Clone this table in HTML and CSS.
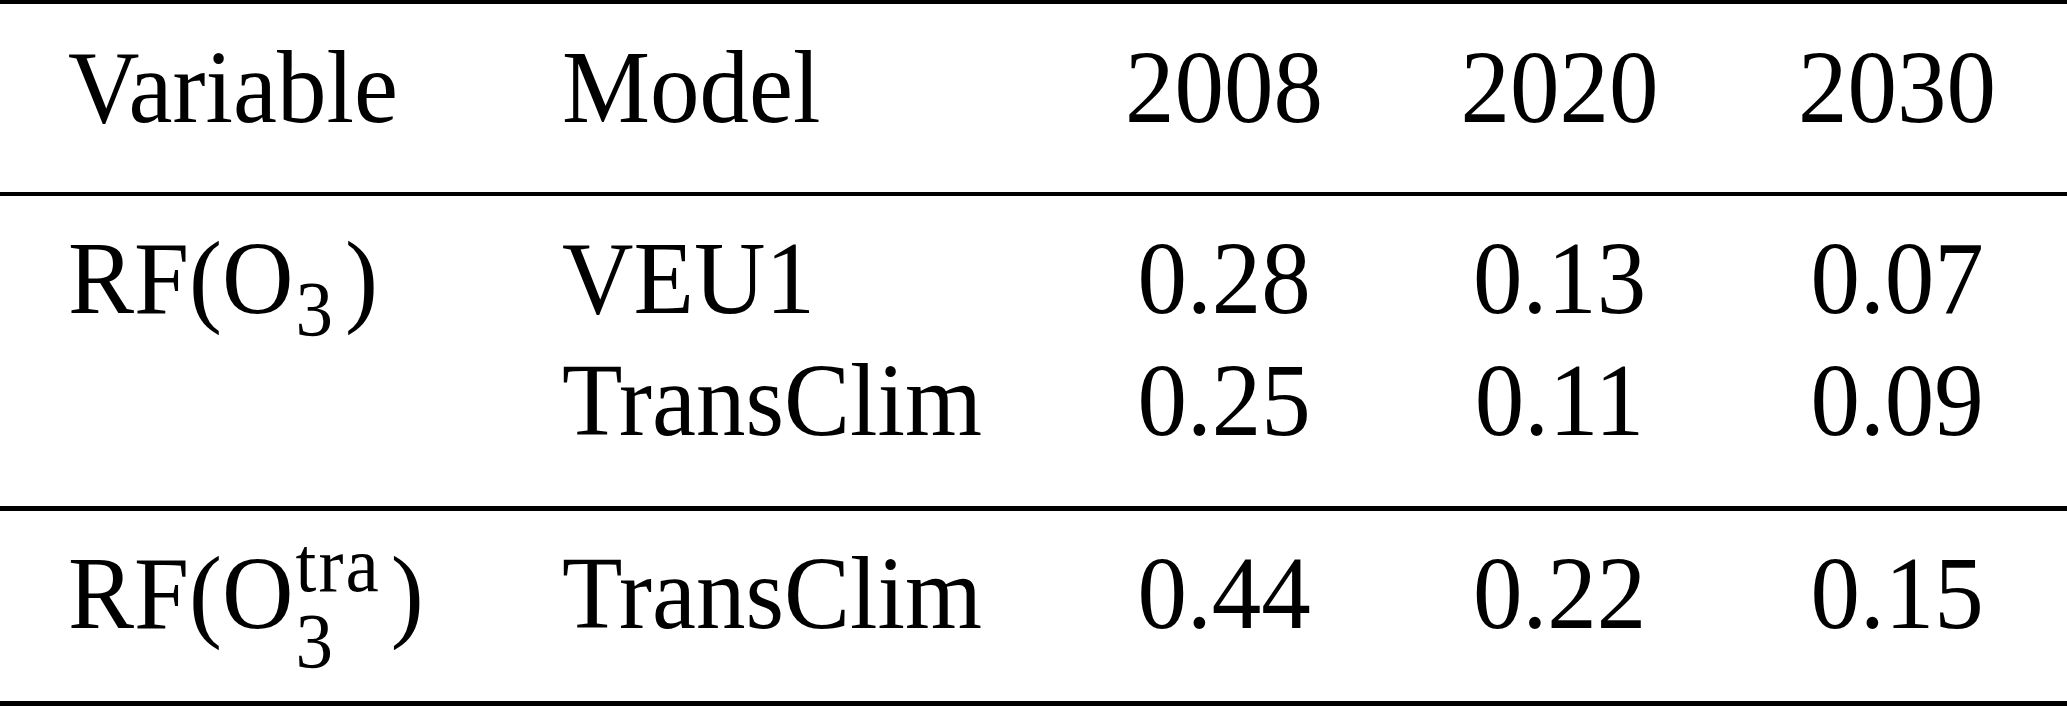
FILE: index.html
```html
<!DOCTYPE html>
<html>
<head>
<meta charset="utf-8">
<link rel="stylesheet" href="styles.css">
</head>
<body>
<table class="tbl">
  <colgroup>
    <col class="c1"><col class="c2"><col class="c3"><col class="c4"><col class="c5">
  </colgroup>
  <thead>
    <tr>
      <th><span class="tx">Variable</span></th>
      <th><span class="tx">Model</span></th>
      <th class="num"><span class="tx">2008</span></th>
      <th class="num"><span class="tx">2020</span></th>
      <th class="num"><span class="tx">2030</span></th>
    </tr>
  </thead>
  <tbody class="grp">
    <tr class="first">
      <td><span class="tx">RF(O<span class="sub sub-a">3</span>)</span></td>
      <td><span class="tx">VEU1</span></td>
      <td class="num"><span class="tx">0.28</span></td>
      <td class="num"><span class="tx">0.13</span></td>
      <td class="num"><span class="tx">0.07</span></td>
    </tr>
    <tr class="last">
      <td></td>
      <td><span class="tx">TransClim</span></td>
      <td class="num"><span class="tx">0.25</span></td>
      <td class="num"><span class="tx">0.11</span></td>
      <td class="num"><span class="tx">0.09</span></td>
    </tr>
  </tbody>
  <tbody class="grp grp-end">
    <tr class="first last">
      <td><span class="tx">RF(O<span class="sub sub-b">3</span><span class="sup">tra</span>)</span></td>
      <td><span class="tx">TransClim</span></td>
      <td class="num"><span class="tx">0.44</span></td>
      <td class="num"><span class="tx">0.22</span></td>
      <td class="num"><span class="tx">0.15</span></td>
    </tr>
  </tbody>
</table>
</body>
</html>
```
FILE: styles.css
```css
html, body {
  margin: 0;
  padding: 0;
  background: #ffffff;
}

.tbl {
  width: 2067px;
  table-layout: fixed;
  border-collapse: separate;
  border-spacing: 0;
  font-family: "Liberation Serif", "Times New Roman", serif;
  font-size: 99px;
  line-height: 122px;
  color: #000;
}

.c1 { width: 494px; }
.c2 { width: 562px; }
.c3 { width: 336px; }
.c4 { width: 335px; }
.c5 { width: 340px; }

.tbl th,
.tbl td {
  font-weight: normal;
  text-align: left;
  padding: 0 0 0 68px;
  white-space: nowrap;
  vertical-align: baseline;
}

.tbl th.num,
.tbl td.num {
  text-align: center;
  padding: 0;
}

.tx {
  display: inline-block;
  transform: scaleY(1.045);
  transform-origin: 50% 94px;
}

.tbl thead th {
  border-top: 4px solid #000;
  border-bottom: 4px solid #000;
  padding-top: 24px;
  padding-bottom: 42px;
}

.tbl .first td { padding-top: 23px; }
.tbl .grp .last td {
  padding-bottom: 43px;
  border-bottom: 5px solid #000;
}
.tbl .grp-end .last td { padding-bottom: 45px; }

.sub,
.sup {
  font-size: 75px;
  line-height: 0;
}

.sub { margin-left: 2px; }
.sub-a { vertical-align: -21px; margin-right: 12px; }
.sub-b { vertical-align: -37px; }

.sup {
  vertical-align: 35px;
  letter-spacing: 2px;
  margin-left: -0.5em;
  margin-right: 10px;
}
```
